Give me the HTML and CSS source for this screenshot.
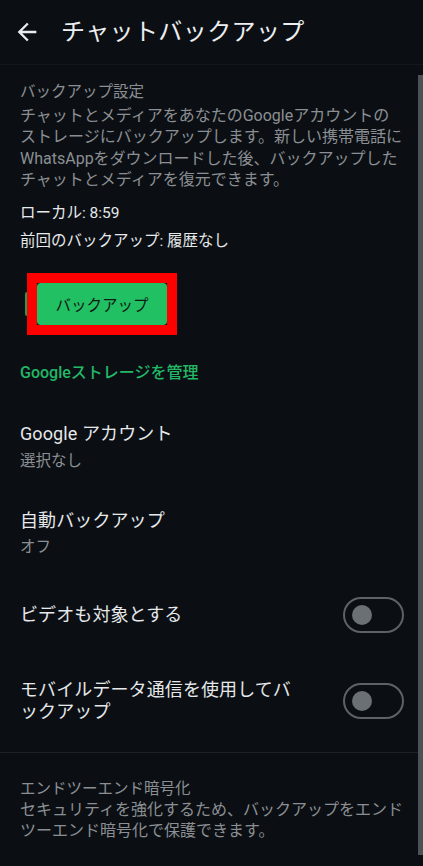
FILE: index.html
```html
<!DOCTYPE html>
<html lang="ja">
<head>
<meta charset="utf-8">
<title>チャットバックアップ</title>
<link rel="stylesheet" href="styles.css">
</head>
<body>
<div class="screen">
  <header class="header">
    <svg class="back" viewBox="0 0 24 24" width="28" height="28"><path d="M20 11H7.83l5.59-5.59L12 4l-8 8 8 8 1.41-1.41L7.83 13H20v-2z" fill="#e9ecee"/></svg>
    <h1 class="title">チャットバックアップ</h1>
  </header>

  <section class="backup">
    <div class="label">バックアップ設定</div>
    <p class="desc">チャットとメディアをあなたのGoogleアカウントの<br>ストレージにバックアップします。新しい携帯電話に<br>WhatsAppをダウンロードした後、バックアップした<br>チャットとメディアを復元できます。</p>
    <div class="status">
      <div>ローカル: 8:59</div>
      <div>前回のバックアップ: 履歴なし</div>
    </div>
    <div class="btn-frame">
      <button class="btn">バックアップ</button>
    </div>
    <div class="manage">Googleストレージを管理</div>
  </section>

  <section class="items">
    <div class="item first">
      <div class="item-title">Google アカウント</div>
      <div class="item-sub">選択なし</div>
    </div>
    <div class="item second">
      <div class="item-title">自動バックアップ</div>
      <div class="item-sub">オフ</div>
    </div>
    <div class="toggle-row row-one">
      <div class="item-title">ビデオも対象とする</div>
      <div class="toggle"><span class="knob"></span></div>
    </div>
    <div class="toggle-row row-two">
      <div class="item-title two-line">モバイルデータ通信を使用してバ<br>ックアップ</div>
      <div class="toggle"><span class="knob"></span></div>
    </div>
  </section>

  <div class="divider"></div>

  <section class="e2e">
    <div class="label e2e-label">エンドツーエンド暗号化</div>
    <p class="desc e2e-desc">セキュリティを強化するため、バックアップをエンド<br>ツーエンド暗号化で保護できます。</p>
  </section>

  <div class="scrollbar"></div>
</div>
</body>
</html>
```

FILE: styles.css
```css
html, body {
  margin: 0;
  padding: 0;
  background: #0b0f14;
}

body {
  font-family: Roboto, "Noto Sans CJK JP", "Noto Sans", sans-serif;
  color: #e6e8ea;
}

.screen {
  position: relative;
  width: 423px;
  height: 866px;
  overflow: hidden;
  background: #0b0f14;
}

.header {
  height: 64px;
  display: flex;
  align-items: center;
  padding-left: 13px;
  border-bottom: 1px solid #13181d;
}

.back {
  display: block;
  flex: none;
}

.title {
  margin: 0 0 0 20px;
  font-size: 24px;
  font-weight: 400;
  line-height: 30px;
  color: #eceef0;
  letter-spacing: 0.4px;
}

.backup {
  padding: 17px 0 0 20px;
}

.label {
  font-size: 15.5px;
  line-height: 21px;
  color: #8b8f93;
}

.desc {
  margin: 1.5px 0 0;
  font-size: 16px;
  line-height: 21.5px;
  color: #8b8f93;
  white-space: nowrap;
}

.status {
  margin-top: 8.5px;
  font-size: 15.5px;
  line-height: 28px;
  color: #e6e8ea;
}

.btn-frame {
  position: relative;
  margin: 18px 0 0 7px;
  width: 150px;
  height: 62px;
  box-sizing: border-box;
  border: 10px solid #ff0000;
  background: #0b0f14;
}

.btn-frame::before {
  content: "";
  position: absolute;
  left: -12px;
  top: 9px;
  width: 2px;
  height: 24px;
  border-radius: 12px 0 0 12px;
  background: #1e9e53;
}

.btn {
  display: block;
  width: 100%;
  height: 100%;
  border: 0;
  border-radius: 4px;
  background: #21c063;
  color: #0f1a14;
  font-family: Roboto, "Noto Sans CJK JP", sans-serif;
  font-size: 15.5px;
  padding: 0;
}

.manage {
  margin-top: 27px;
  font-size: 16px;
  line-height: 22px;
  font-weight: 500;
  color: #22b866;
}

.items {
  padding: 0 19px 0 20px;
}

.item-title {
  font-size: 18px;
  line-height: 26px;
  color: #e6e8ea;
  letter-spacing: 0.1px;
}

.item-sub {
  margin-top: 3px;
  font-size: 15.5px;
  line-height: 22px;
  color: #8b8f93;
}

.item.first {
  margin-top: 37px;
}

.item.second {
  margin-top: 36px;
}

.item.second .item-sub {
  margin-top: 2px;
}

.toggle-row {
  display: flex;
  align-items: center;
  justify-content: space-between;
}

.row-one {
  margin-top: 39px;
}

.row-two {
  margin-top: 46px;
}

.two-line {
  line-height: 22px;
}

.toggle {
  flex: none;
  width: 61px;
  height: 36px;
  box-sizing: border-box;
  border: 2px solid #5d6267;
  border-radius: 18px;
  display: flex;
  align-items: center;
  padding-left: 7px;
}

.knob {
  display: block;
  width: 20px;
  height: 20px;
  border-radius: 50%;
  background: #6b7075;
}

.divider {
  margin-top: 29px;
  height: 1px;
  background: #1d2226;
}

.e2e {
  padding: 25px 0 0 20px;
}

.e2e-label {
  line-height: 22px;
}

.e2e-desc {
  margin-top: 0;
  line-height: 20.5px;
}

.scrollbar {
  position: absolute;
  right: 0;
  top: 75px;
  width: 5px;
  height: 780px;
  background: #4b5154;
}
```
